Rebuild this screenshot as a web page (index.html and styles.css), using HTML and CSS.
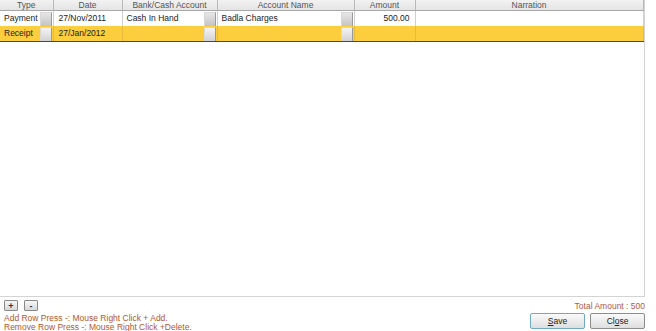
FILE: index.html
```html
<!DOCTYPE html>
<html lang="en">
<head>
<meta charset="UTF-8">
<title>Voucher Entry</title>
<link rel="stylesheet" href="styles.css">
</head>
<body>
  <div class="grid-frame">
    <table class="grid">
      <colgroup>
        <col class="c-type">
        <col class="c-date">
        <col class="c-bank">
        <col class="c-acc">
        <col class="c-amt">
        <col class="c-narr">
      </colgroup>
      <tr>
        <th>Type</th>
        <th>Date</th>
        <th>Bank/Cash Account</th>
        <th>Account Name</th>
        <th>Amount</th>
        <th>Narration</th>
      </tr>
      <tr>
        <td class="combo"><span>Payment</span><i class="drop"></i></td>
        <td>27/Nov/2011</td>
        <td class="combo"><span>Cash In Hand</span><i class="drop"></i></td>
        <td class="combo"><span>Badla Charges</span><i class="drop"></i></td>
        <td class="num">500.00</td>
        <td></td>
      </tr>
      <tr class="selected">
        <td class="combo"><span>Receipt</span><i class="drop"></i></td>
        <td>27/Jan/2012</td>
        <td class="combo"><span></span><i class="drop"></i></td>
        <td class="combo"><span></span><i class="drop"></i></td>
        <td class="num"></td>
        <td></td>
      </tr>
    </table>
  </div>

  <div class="footer">
    <div class="left">
      <div class="row-buttons">
        <button class="mini">+</button>
        <button class="mini">-</button>
      </div>
      <div class="hint">Add Row Press -: Mouse Right Click + Add.</div>
      <div class="hint">Remove Row Press -: Mouse Right Click +Delete.</div>
    </div>
    <div class="right">
      <div class="total">Total Amount : 500</div>
      <div class="actions">
        <button class="btn"><u>S</u>ave</button>
        <button class="btn">Cl<u>o</u>se</button>
      </div>
    </div>
  </div>
</body>
</html>
```

FILE: styles.css
```css
body {
  margin: 0;
  width: 656px;
  height: 331px;
  overflow: hidden;
  background-color: #fff;
  font-family: "Liberation Sans", Arial, sans-serif;
  font-size: 8.5px;
  color: #222;
}
.grid-frame {
  width: 644px;
  height: 296px;
  border-right: 1px solid #d4d4d4;
  border-bottom: 1px solid #d4d4d4;
  background-color: #fff;
}
.grid {
  width: 643px;
  border-collapse: collapse;
  table-layout: fixed;
}
.c-type { width: 53px; }
.c-date { width: 69px; }
.c-bank { width: 95px; }
.c-acc { width: 137px; }
.c-amt { width: 61px; }
.c-narr { width: 228px; }
th {
  height: 10px;
  padding: 0;
  font-weight: normal;
  color: #555;
  background: linear-gradient(#f2f2f2, #e4e4e4);
  border-right: 1px solid #b8b8b8;
  border-bottom: 1px solid #a8a8a8;
  line-height: 10px;
}
td {
  height: 15px;
  padding: 0 0 0 5px;
  border-right: 1px solid #d0d0d0;
  white-space: nowrap;
  overflow: hidden;
  line-height: 15px;
}
.selected td {
  height: 14px;
}
td.combo {
  padding: 0 0 0 4px;
}
.combo {
  position: relative;
}
.drop {
  position: absolute;
  top: 1px;
  right: 1px;
  width: 10px;
  height: 13px;
  background: linear-gradient(#e6e6e6, #c4c4c4);
  border: 1px solid #9a9a9a;
  border-top-color: #d8d8d8;
  border-left-color: #d8d8d8;
}
.num {
  text-align: right;
  padding-right: 5px;
}
.selected td {
  background-color: #fccd3c;
  border-bottom: 1px solid #5e4618;
  border-right-color: #e8bb38;
}
.selected .drop {
  background: linear-gradient(#f4f4f4, #d2d2d2);
}
.footer {
  display: flex;
  justify-content: space-between;
  width: 645px;
  padding-top: 3px;
}
.left {
  padding-left: 4px;
}
.row-buttons {
  display: flex;
  gap: 6px;
}
.mini {
  width: 14px;
  height: 11px;
  padding: 0;
  font-family: "Liberation Sans", Arial, sans-serif;
  font-size: 9px;
  font-weight: bold;
  line-height: 8px;
  color: #333;
  background: linear-gradient(#f6f6f6, #d8d8d8);
  border: 1px solid #8a8a8a;
  border-radius: 1px;
}
.hint {
  color: #b0582c;
  line-height: 9px;
}
.row-buttons + .hint {
  margin-top: 3px;
}
.right {
  display: flex;
  flex-direction: column;
  align-items: flex-end;
}
.total {
  color: #b0584a;
  margin-top: 1px;
  line-height: 10px;
}
.actions {
  display: flex;
  gap: 5px;
  margin-top: 2px;
}
.btn {
  width: 55px;
  height: 16px;
  padding: 0;
  font-family: "Liberation Sans", Arial, sans-serif;
  font-size: 8.5px;
  color: #222;
  background: linear-gradient(#fafafa, #dedede);
  border: 1px solid #8c8c8c;
  border-radius: 2px;
}
.btn:first-child {
  border-color: #6fa9c4;
}
```
